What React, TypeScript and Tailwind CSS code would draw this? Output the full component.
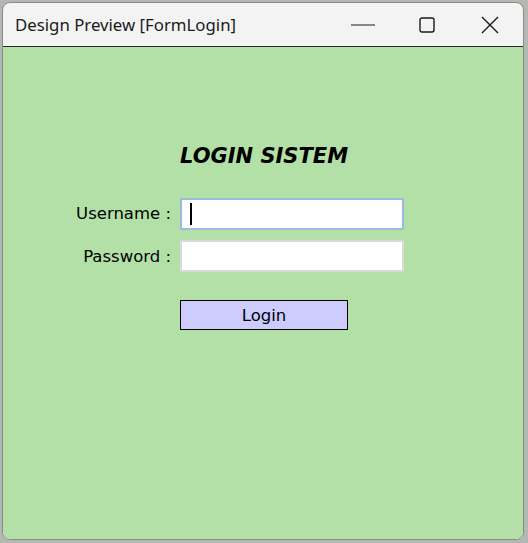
export default function App() {
  return (
    <div className="w-[528px] h-[543px] bg-[#b4b8b2] p-[2px] pr-[4px] pb-[3px]">
      <div className="flex flex-col h-full rounded-[8px] overflow-hidden bg-[#f3f3f3] border border-[#8a8a8a]">
        {/* title bar */}
        <div className="flex items-center h-[43px] shrink-0 pl-[12px]">
          <span className="text-[16.8px] text-[#1a1a1a] font-['Noto_Sans',sans-serif] flex-1">
            Design Preview [FormLogin]
          </span>
          <div className="flex items-center h-full">
            <div className="w-[64px] h-full flex items-center justify-center">
              <svg width="26" height="2" viewBox="0 0 26 2">
                <path d="M1 1H25" stroke="#1a1a1a" strokeWidth="1" />
              </svg>
            </div>
            <div className="w-[64px] h-full flex items-center justify-center">
              <svg width="16" height="16" viewBox="0 0 16 16" fill="none">
                <rect x="1" y="1" width="14" height="14" rx="2" stroke="#1a1a1a" strokeWidth="1.4" />
              </svg>
            </div>
            <div className="w-[64px] h-full flex items-center justify-center pr-[2px]">
              <svg width="18" height="18" viewBox="0 0 18 18" fill="none">
                <path d="M1 1L17 17M17 1L1 17" stroke="#1a1a1a" strokeWidth="1.4" />
              </svg>
            </div>
          </div>
        </div>

        {/* form body */}
        <div className="flex-1 bg-[#b3e0a6] border-t border-[#2a2a2a] pt-[97px] font-['Comic_Sans_MS','DejaVu_Sans',sans-serif] text-black">
          <div className="grid grid-cols-[168px_224px] gap-x-[9px] items-center">
            <div />
            <h1 className="w-[168px] text-center text-[21px] leading-[24px] font-bold italic whitespace-nowrap">LOGIN SISTEM</h1>

            <label className="text-right text-[16.5px] mt-[30px]">Username :</label>
            <div className="mt-[30px] h-[32px] bg-white border-2 border-[#9bbbe0] flex items-center pl-[8px]">
              <div className="w-[2px] h-[22px] bg-black" />
            </div>

            <label className="text-right text-[16.5px] mt-[10px] pt-[3px]">Password :</label>
            <div className="mt-[10px] h-[32px] bg-white border-2 border-[#dadada]" />

            <div />
            <button className="mt-[28px] w-[168px] h-[30px] bg-[#ccccff] border border-black text-[16.5px] leading-none pt-[3px]">
              Login
            </button>
          </div>
        </div>
      </div>
    </div>
  );
}
